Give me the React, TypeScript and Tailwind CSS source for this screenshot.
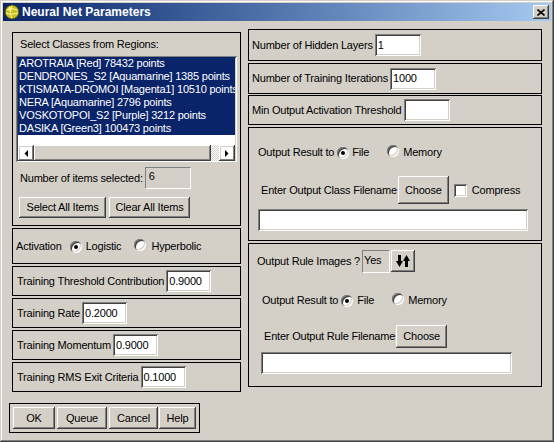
import React from "react";

const RAISED = "shadow-[inset_-1px_-1px_#404040,inset_1px_1px_#ffffff,inset_-2px_-2px_#808080,inset_2px_2px_#d4d0c8]";
const SUNKEN = "shadow-[inset_1px_1px_#808080,inset_-1px_-1px_#ffffff,inset_2px_2px_#404040,inset_-2px_-2px_#d4d0c8]";

const classes = [
  "AROTRAIA [Red] 78432 points",
  "DENDRONES_S2 [Aquamarine] 1385 points",
  "KTISMATA-DROMOI [Magenta1] 10510 points",
  "NERA [Aquamarine] 2796 points",
  "VOSKOTOPOI_S2 [Purple] 3212 points",
  "DASIKA [Green3] 100473 points",
];

function Radio({ checked }: { checked?: boolean }) {
  return (
    <span className={`inline-flex w-[12px] h-[12px] shrink-0 rounded-full bg-white items-center justify-center ${SUNKEN}`}>
      {checked && <span className="w-[4px] h-[4px] rounded-full bg-black" />}
    </span>
  );
}

function Field({ value, className }: { value?: string; className: string }) {
  return <div className={`h-[22px] bg-white pl-[3px] flex items-center shrink-0 ${SUNKEN} ${className}`}>{value}</div>;
}

function Button({ label, className }: { label: string; className: string }) {
  return <div className={`flex items-center justify-center shrink-0 ${RAISED} ${className}`}>{label}</div>;
}

function Arrow({ dir }: { dir: "left" | "right" }) {
  return (
    <div className={`w-[16px] h-[16px] flex items-center justify-center shrink-0 ${RAISED}`}>
      <svg width="4" height="7" viewBox="0 0 4 7">
        {dir === "left" ? <polygon points="4,0 4,7 0.5,3.5" fill="#000" /> : <polygon points="0,0 0,7 3.5,3.5" fill="#000" />}
      </svg>
    </div>
  );
}

export default function App() {
  return (
    <div className={`w-[554px] h-[442px] bg-[#d4d0c8] text-black text-[11px] leading-[13px] tracking-[-0.2px] font-['Liberation_Sans',Arial,sans-serif] shadow-[inset_-1px_-1px_#404040,inset_1px_1px_#d4d0c8,inset_-2px_-2px_#808080,inset_2px_2px_#ffffff] overflow-hidden`}>
      {/* title bar */}
      <div className="mx-[3px] mt-[3px] h-[18px] flex items-center bg-gradient-to-r from-[#0a246a] to-[#a6caf0]">
        <svg width="16" height="16" viewBox="0 0 16 16" className="ml-[1px] shrink-0">
          <circle cx="8" cy="8" r="7" fill="#c8c020" stroke="#404010" strokeWidth="1" />
          <path d="M2.5 6 C5 4.5 10 4.5 13.5 6 M2 9 C5 10.5 10 10.5 14 9 M8 1.5 C6 5 6 11 8 14.5" stroke="#fff8a0" strokeWidth="1" fill="none" />
          <circle cx="6" cy="5" r="2" fill="#f8f080" />
        </svg>
        <span className="ml-[2px] text-white font-bold text-[12px] tracking-normal">Neural Net Parameters</span>
        <div className={`ml-auto mr-[2px] w-[16px] h-[14px] bg-[#d4d0c8] flex items-center justify-center ${RAISED}`}>
          <svg width="8" height="7" viewBox="0 0 8 7">
            <path d="M0.5 0.5 L7.5 6.5 M7.5 0.5 L0.5 6.5" stroke="#000" strokeWidth="1.6" />
          </svg>
        </div>
      </div>

      <div className="flex items-start">
        {/* left column */}
        <div className="ml-[12px] mt-[11px] w-[229px] flex flex-col gap-[2px]">
          <div className="h-[194px] border border-black flex flex-col">
            <div className="pl-[7px] pt-[5px]">Select Classes from Regions:</div>
            <div className={`mt-[5px] ml-[3px] w-[221px] h-[106px] bg-white px-[2px] pt-[1px] pb-[1px] flex flex-col ${SUNKEN}`}>
              <div className="flex-1 overflow-hidden">
                {classes.map((c) => (
                  <div key={c} className="h-[13px] bg-[#0a246a] text-white pl-[1px] whitespace-nowrap">
                    {c}
                  </div>
                ))}
              </div>
              <div className="h-[16px] flex">
                <Arrow dir="left" />
                <div className={`flex-1 bg-[#d4d0c8] ${RAISED}`} />
                <div className="w-[8px] bg-[repeating-conic-gradient(#ffffff_0_25%,#d4d0c8_0_50%)] bg-[length:2px_2px]" />
                <Arrow dir="right" />
              </div>
            </div>
            <div className="mt-[5px] pl-[7px] h-[22px] flex items-center">
              <span>Number of items selected:</span>
              <div className="ml-[2px] w-[46px] h-[22px] pl-[3px] pt-[2px] border border-t-[#808080] border-l-[#808080] border-b-white border-r-white">6</div>
            </div>
            <div className="mt-[8px] pl-[6px] flex gap-[3px]">
              <Button label="Select All Items" className="w-[87px] h-[21px]" />
              <Button label="Clear All Items" className="w-[81px] h-[21px]" />
            </div>
          </div>

          <div className="h-[36px] border border-black flex items-center pl-[3px]">
            <span>Activation</span>
            <span className="ml-[8px]"><Radio checked /></span>
            <span className="ml-[4px]">Logistic</span>
            <span className="ml-[13px]"><Radio /></span>
            <span className="ml-[5px]">Hyperbolic</span>
          </div>

          {[
            ["Training Threshold Contribution", "0.9000"],
            ["Training Rate", "0.2000"],
            ["Training Momentum", "0.9000"],
            ["Training RMS Exit Criteria", "0.1000"],
          ].map(([l, v]) => (
            <div key={l} className="h-[30px] border border-black flex items-center pl-[4px]">
              <span>{l}</span>
              <Field value={v} className="ml-[2px] w-[45px]" />
            </div>
          ))}
        </div>

        {/* right column */}
        <div className="ml-[7px] mt-[8px] w-[294px] flex flex-col">
          <div className="h-[32px] border border-black flex items-center pl-[3px]">
            <span>Number of Hidden Layers</span>
            <Field value="1" className="ml-[2px] w-[46px]" />
          </div>
          <div className="mt-[2px] h-[31px] border border-black flex items-center pl-[3px]">
            <span>Number of Training Iterations</span>
            <Field value="1000" className="ml-[2px] w-[46px]" />
          </div>
          <div className="mt-[1px] h-[30px] border border-black flex items-center pl-[3px]">
            <span>Min Output Activation Threshold</span>
            <Field className="ml-[2px] w-[46px]" />
          </div>

          <div className="mt-[2px] h-[114px] border border-black flex flex-col">
            <div className="mt-[16px] pl-[9px] h-[16px] flex items-center">
              <span>Output Result to</span>
              <span className="ml-[3px]"><Radio checked /></span>
              <span className="ml-[3px]">File</span>
              <span className="ml-[18px]"><Radio /></span>
              <span className="ml-[4px]">Memory</span>
            </div>
            <div className="mt-[16px] pl-[12px] h-[28px] flex items-center">
              <span>Enter Output Class Filename</span>
              <Button label="Choose" className="ml-[1px] w-[51px] h-[28px]" />
              <span className={`ml-[5px] w-[13px] h-[13px] bg-white ${SUNKEN}`} />
              <span className="ml-[5px]">Compress</span>
            </div>
            <Field className="mt-[5px] ml-[9px] w-[270px]" />
          </div>

          <div className="mt-[2px] h-[144px] border border-black flex flex-col">
            <div className="mt-[6px] pl-[8px] h-[23px] flex items-center">
              <span>Output Rule Images ?</span>
              <div className="ml-[2px] w-[28px] h-[23px] pl-[1px] pt-[3px] border border-t-[#808080] border-l-[#808080] border-b-white border-r-white">Yes</div>
              <div className={`ml-[1px] self-start w-[24px] h-[22px] flex items-center justify-center ${RAISED}`}>
                <svg width="14" height="12" viewBox="0 0 14 12">
                  <rect x="2" y="0" width="3" height="7" fill="#000" />
                  <polygon points="0,6 7,6 3.5,12" fill="#000" />
                  <polygon points="7,6 14,6 10.5,0" fill="#000" />
                  <rect x="9" y="5" width="3" height="7" fill="#000" />
                </svg>
              </div>
            </div>
            <div className="mt-[19px] pl-[13px] h-[16px] flex items-center">
              <span>Output Result to</span>
              <span className="ml-[3px]"><Radio checked /></span>
              <span className="ml-[4px]">File</span>
              <span className="ml-[18px]"><Radio /></span>
              <span className="ml-[4px]">Memory</span>
            </div>
            <div className="mt-[17px] pl-[15px] h-[23px] flex items-center">
              <span>Enter Output Rule Filename</span>
              <Button label="Choose" className="ml-[1px] w-[51px] h-[23px]" />
            </div>
            <Field className="mt-[4px] ml-[12px] w-[251px]" />
          </div>
        </div>
      </div>

      {/* footer buttons */}
      <div className="mt-[11px] ml-[9px] w-[191px] h-[30px] border border-black flex pl-[3px] pt-[3px]">
        <Button label="OK" className="w-[42px] h-[22px]" />
        <Button label="Queue" className="ml-[2px] w-[50px] h-[22px]" />
        <Button label="Cancel" className="ml-[2px] w-[49px] h-[22px]" />
        <Button label="Help" className="ml-[1px] w-[37px] h-[22px]" />
      </div>
    </div>
  );
}
